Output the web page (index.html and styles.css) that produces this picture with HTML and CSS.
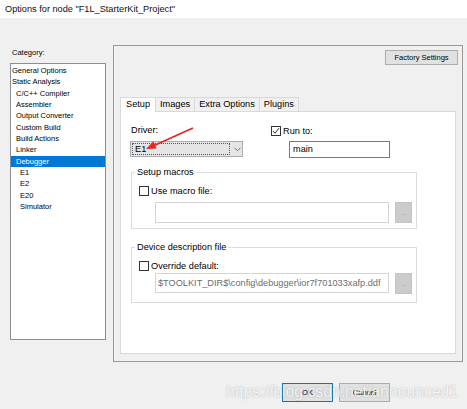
FILE: index.html
```html
<!DOCTYPE html>
<html>
<head>
<meta charset="utf-8">
<link rel="stylesheet" href="styles.css">
</head>
<body>
<div class="window">
  <div class="titlebar">Options for node "F1L_StarterKit_Project"</div>
  <div class="main">
    <div class="left">
      <div class="cat-label">Category:</div>
      <ul class="cat-list">
        <li>General Options</li>
        <li>Static Analysis</li>
        <li class="l1">C/C++ Compiler</li>
        <li class="l1">Assembler</li>
        <li class="l1">Output Converter</li>
        <li class="l1">Custom Build</li>
        <li class="l1">Build Actions</li>
        <li class="l1">Linker</li>
        <li class="l1 selected">Debugger</li>
        <li class="l2">E1</li>
        <li class="l2">E2</li>
        <li class="l2">E20</li>
        <li class="l2">Simulator</li>
      </ul>
    </div>
    <div class="right">
      <div class="factory-row"><button class="btn factory">Factory Settings</button></div>
      <div class="tabs">
        <div class="tab active">Setup</div>
        <div class="tab">Images</div>
        <div class="tab">Extra Options</div>
        <div class="tab">Plugins</div>
      </div>
      <div class="tab-panel">
        <div class="row1">
          <div class="driver-col">
            <div class="field-label">Driver:</div>
            <div class="combo">
              <span class="combo-focus">E1</span>
              <svg class="chev" width="7" height="5" viewBox="0 0 7 5"><polyline points="0.5,0.8 3.5,3.8 6.5,0.8" fill="none" stroke="#707070" stroke-width="1"/></svg>
            </div>
          </div>
          <div class="runto-col">
            <div class="check-row">
              <span class="cb"><svg width="8" height="8" viewBox="0 0 8 8"><polyline points="1,4 3,6.2 7,1.2" fill="none" stroke="#333" stroke-width="1"/></svg></span>
              <span>Run to:</span>
            </div>
            <div class="text-input main-input">main</div>
          </div>
        </div>
        <fieldset class="group g1">
          <legend>Setup macros</legend>
          <div class="check-row grp-check"><span class="cb"></span><span>Use macro file:</span></div>
          <div class="file-row">
            <div class="file-input"></div>
            <div class="dots">...</div>
          </div>
        </fieldset>
        <fieldset class="group g2">
          <legend>Device description file</legend>
          <div class="check-row grp-check"><span class="cb"></span><span>Override default:</span></div>
          <div class="file-row row-b">
            <div class="file-input disabled">$TOOLKIT_DIR$\config\debugger\ior7f701033xafp.ddf</div>
            <div class="dots">...</div>
          </div>
        </fieldset>
      </div>
    </div>
  </div>
  <div class="footer">
    <button class="btn dlg ok">OK</button>
    <button class="btn dlg">Cancel</button>
  </div>
  <div class="watermark">https://blog.csdn.net/announced1</div>
  <svg class="arrow" width="467" height="409" viewBox="0 0 467 409">
    <line x1="193" y1="128" x2="153" y2="146" stroke="#e8251f" stroke-width="1.8"/>
    <polygon points="146,149 153.5,141.3 156.7,148.6" fill="#e8251f"/>
  </svg>
</div>
</body>
</html>
```
FILE: styles.css
```css
html, body {
  margin: 0;
  padding: 0;
}
body {
  background: #f0f0f0;
  font-family: "Liberation Sans", Arial, sans-serif;
  color: #000;
}
.window {
  position: relative;
  width: 467px;
  height: 409px;
  background: #f0f0f0;
  overflow: hidden;
}
.titlebar {
  height: 18px;
  line-height: 18px;
  background: #fff;
  font-size: 9.2px;
  padding-left: 5px;
  color: #111;
}
.main {
  display: flex;
  margin-top: 27px;
  padding-left: 10px;
}
.left {
  width: 96px;
  margin-top: 3px;
}
.cat-label {
  font-size: 7.5px;
  line-height: 10px;
  height: 10px;
  padding-left: 2px;
}
.cat-list {
  list-style: none;
  margin: 5px 0 0;
  padding: 1px 0 0;
  height: 277px;
  box-sizing: border-box;
  border: 1px solid #8a8e96;
  background: #fff;
  font-size: 7.5px;
  line-height: 11.33px;
}
.cat-list li {
  padding-left: 1px;
  white-space: nowrap;
}
.cat-list li.l1 { padding-left: 5px; }
.cat-list li.l2 { padding-left: 9px; }
.cat-list li.selected {
  background: #0078d7;
  color: #fff;
}
.right {
  margin-left: 7px;
  width: 350px;
  height: 317px;
  box-sizing: border-box;
  border: 1px solid #9a9a9a;
  padding: 4px 6px 0 6px;
}
.factory-row {
  display: flex;
  justify-content: flex-end;
  margin-right: -2px;
}
.btn {
  font-family: "Liberation Sans", Arial, sans-serif;
  font-size: 7.5px;
  color: #000;
  background: #e1e1e1;
  border: 1px solid #adadad;
  padding: 0;
  margin: 0;
  box-sizing: border-box;
}
.factory {
  width: 73px;
  height: 15px;
}
.tabs {
  display: flex;
  margin-top: 32px;
  height: 14px;
  padding-left: 1px;
}
.tab {
  position: relative;
  height: 14px;
  box-sizing: border-box;
  border: 1px solid #d9d9d9;
  border-bottom: none;
  margin-left: -1px;
  padding: 0 4px;
  line-height: 13px;
  font-size: 9.2px;
  background: #f0f0f0;
  white-space: nowrap;
}
.tab.active {
  background: #fff;
  height: 15px;
  z-index: 1;
  padding: 0 5px;
}
.tab-panel {
  height: 243px;
  box-sizing: border-box;
  border: 1px solid #d9d9d9;
  background: #fff;
  font-size: 9.2px;
}
.row1 {
  display: flex;
  margin-top: 13px;
  padding-left: 9px;
}
.driver-col {
  width: 141px;
}
.field-label {
  height: 11px;
  line-height: 11px;
  padding-left: 1px;
}
.combo {
  margin-top: 5px;
  width: 113px;
  height: 16px;
  box-sizing: border-box;
  border: 1px solid #acacac;
  background: #e5e5e5;
  display: flex;
  align-items: center;
  padding-left: 1px;
}
.combo-focus {
  width: 98px;
  height: 12px;
  box-sizing: border-box;
  border: 1px dotted #555;
  line-height: 10px;
  padding-left: 2px;
}
.chev {
  margin-left: 4px;
}
.check-row {
  display: flex;
  align-items: center;
  gap: 2px;
  height: 10px;
  line-height: 10px;
}
.runto-col .check-row {
  margin-top: 1px;
}
.cb {
  width: 10px;
  height: 10px;
  box-sizing: border-box;
  border: 1px solid #333;
  background: #fff;
  display: flex;
  align-items: center;
  justify-content: center;
}
.text-input {
  box-sizing: border-box;
  border: 1px solid #7a7a7a;
  background: #fff;
  padding-left: 3px;
}
.main-input {
  margin-top: 5px;
  margin-left: 18px;
  width: 101px;
  height: 17px;
  line-height: 15px;
}
.group {
  margin: 8px 0 0 10px;
  width: 286px;
  box-sizing: border-box;
  border: 1px solid #dcdcdc;
  padding: 0 0 5px 0;
  min-width: 0;
}
.group legend {
  margin-left: 3px;
  padding: 0 2px;
  line-height: 12px;
  font-size: 9.2px;
}
.g2 {
  margin-top: 12px;
  padding-bottom: 8px;
}
.grp-check {
  margin-top: 8px;
  padding-left: 7px;
}
.file-row {
  display: flex;
  margin-top: 6px;
  padding-left: 23px;
  gap: 6px;
}
.file-input {
  width: 234px;
  height: 21px;
  box-sizing: border-box;
  border: 1px solid #d4d4d4;
  background: #fff;
  line-height: 19px;
  padding-left: 2px;
  white-space: nowrap;
  overflow: hidden;
}
.row-b {
  margin-top: 2px;
}
.row-b .file-input {
  height: 20px;
  line-height: 18px;
}
.file-input.disabled {
  color: #6d6d6d;
}
.dots {
  width: 17px;
  height: 21px;
  box-sizing: border-box;
  background: #cccccc;
  border: 1px solid #c4c4c4;
  font-size: 6px;
  color: #888;
  text-align: center;
  line-height: 21px;
}
.footer {
  display: flex;
  justify-content: flex-end;
  gap: 6px;
  padding-right: 77px;
  margin-top: 21px;
}
.dlg {
  width: 51px;
  height: 19px;
}
.ok {
  border-color: #0078d7;
}
.watermark {
  position: absolute;
  left: 226px;
  top: 383px;
  font-size: 15.75px;
  line-height: 18px;
  color: rgba(255, 255, 255, 0.85);
  text-shadow: 0 0 1.5px rgba(110, 110, 110, 0.55);
  white-space: nowrap;
  pointer-events: none;
}
.arrow {
  position: absolute;
  left: 0;
  top: 0;
  pointer-events: none;
}
```
